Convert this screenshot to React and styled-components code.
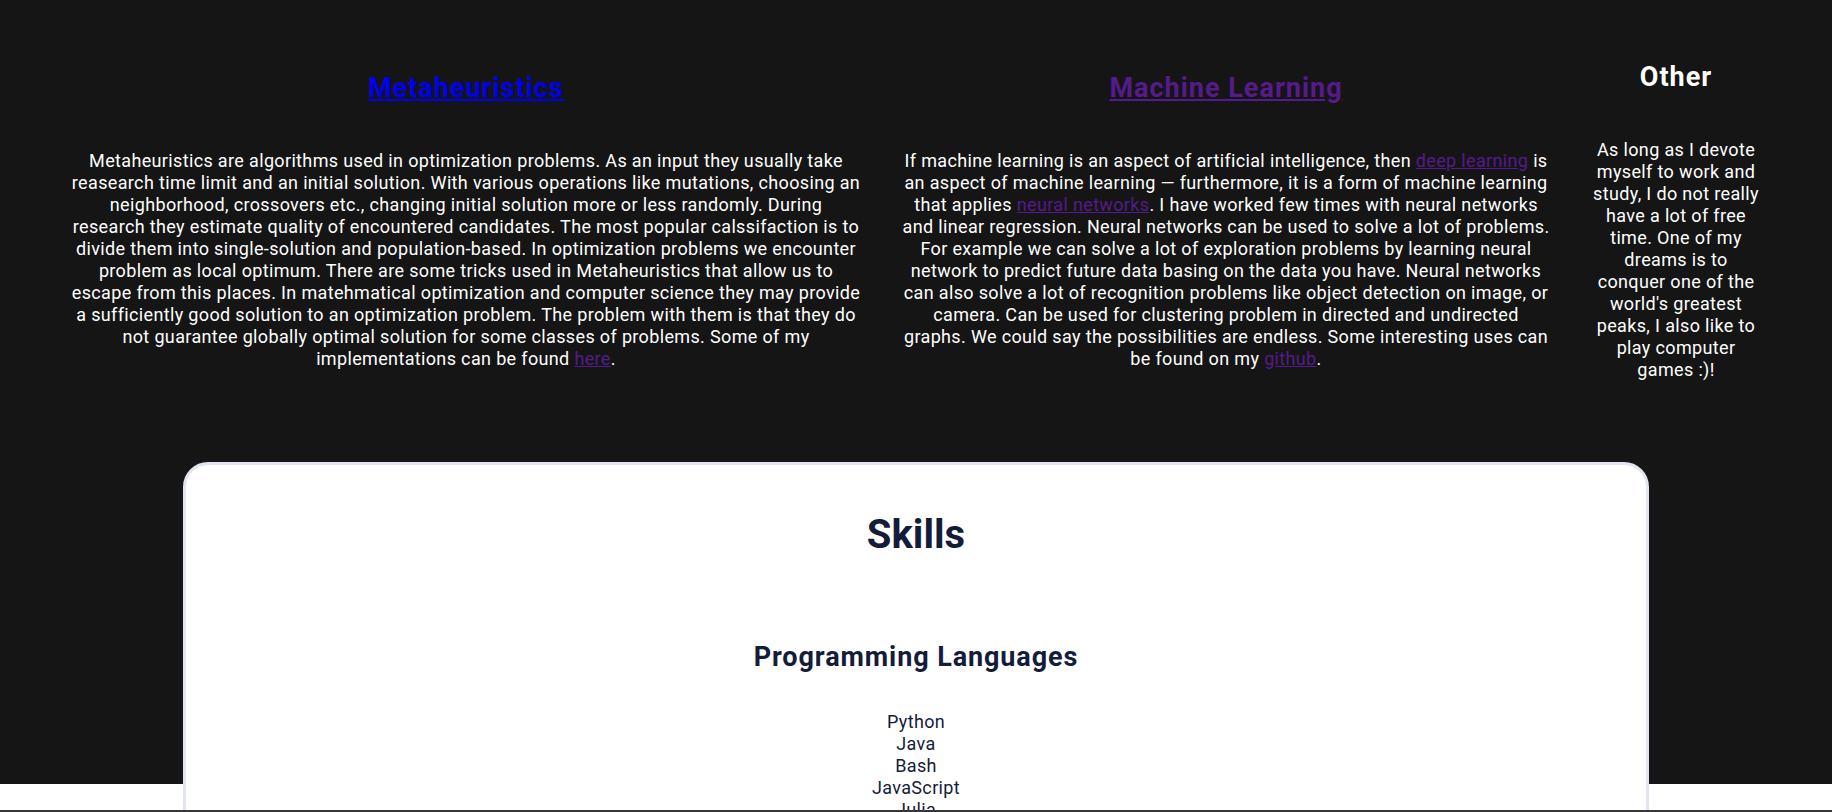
import React from 'react';
import styled, { createGlobalStyle } from 'styled-components';

const Global = createGlobalStyle`
  html, body { margin: 0; padding: 0; background: #fff; }
  body {
    font-family: Roboto, "Open Sans", sans-serif;
    font-size: 18px;
    -webkit-font-smoothing: antialiased;
  }
`;

const Interests = styled.section`
  box-sizing: border-box;
  height: 784px;
  background: #151515;
  color: #fff;
  display: flex;
  align-items: center;
  justify-content: center;
  gap: 30px;
  padding: 0 66px 342px;
`;

const Column = styled.div`
  flex: 0 0 ${(p) => p.$w}px;
  text-align: center;
`;

const Heading = styled.h2`
  margin: 0;
  font-size: 27px;
  line-height: 31px;
  font-weight: 700;
  letter-spacing: 1px;
`;

const Link = styled.a`
  color: ${(p) => (p.$visited ? '#551a8b' : '#0000ee')};
  text-decoration: underline;
`;

const Para = styled.p`
  margin: 46px 0 0;
  line-height: 22px;
  letter-spacing: 0.35px;
  white-space: nowrap;
`;

const SkillsCard = styled.section`
  position: relative;
  width: 80%;
  box-sizing: border-box;
  margin: -322px auto 0;
  background: #fff;
  border: 3px solid #e1e4f3;
  border-radius: 25px;
  color: #141c3a;
  text-align: center;
  padding: 47px 0 40px;
`;

const Title = styled.h1`
  margin: 0;
  font-size: 40px;
  line-height: 46px;
  font-weight: 700;
`;

const SubTitle = styled.h3`
  margin: 84px 0 0;
  font-size: 27px;
  line-height: 31px;
  font-weight: 700;
  letter-spacing: 0.9px;
`;

const List = styled.ul`
  list-style: none;
  margin: 38px 0 0;
  padding: 0;
  line-height: 22px;
  letter-spacing: 0.35px;
`;

const BottomRule = styled.div`
  position: fixed;
  left: 0;
  right: 0;
  bottom: 0;
  height: 2px;
  background: #363636;
  z-index: 5;
`;

function Lines({ lines }) {
  return lines.map((line, i) => (
    <React.Fragment key={i}>
      {i > 0 && <br />}
      {line}
    </React.Fragment>
  ));
}

const metaLines = [
  'Metaheuristics are algorithms used in optimization problems. As an input they usually take',
  'reasearch time limit and an initial solution. With various operations like mutations, choosing an',
  'neighborhood, crossovers etc., changing initial solution more or less randomly. During',
  'research they estimate quality of encountered candidates. The most popular calssifaction is to',
  'divide them into single-solution and population-based. In optimization problems we encounter',
  'problem as local optimum. There are some tricks used in Metaheuristics that allow us to',
  'escape from this places. In matehmatical optimization and computer science they may provide',
  'a sufficiently good solution to an optimization problem. The problem with them is that they do',
  'not guarantee globally optimal solution for some classes of problems. Some of my',
  <>
    implementations can be found <Link $visited href="#here">here</Link>.
  </>,
];

const mlLines = [
  <>
    If machine learning is an aspect of artificial intelligence, then{' '}
    <Link $visited href="#dl">deep learning</Link> is
  </>,
  'an aspect of machine learning — furthermore, it is a form of machine learning',
  <>
    that applies <Link $visited href="#nn">neural networks</Link>. I have worked few times with neural networks
  </>,
  'and linear regression. Neural networks can be used to solve a lot of problems.',
  'For example we can solve a lot of exploration problems by learning neural',
  'network to predict future data basing on the data you have. Neural networks',
  'can also solve a lot of recognition problems like object detection on image, or',
  'camera. Can be used for clustering problem in directed and undirected',
  'graphs. We could say the possibilities are endless. Some interesting uses can',
  <>
    be found on my <Link $visited href="#gh">github</Link>.
  </>,
];

const otherLines = [
  'As long as I devote',
  'myself to work and',
  'study, I do not really',
  'have a lot of free',
  'time. One of my',
  'dreams is to',
  'conquer one of the',
  "world's greatest",
  'peaks, I also like to',
  'play computer',
  'games :)!',
];

const languages = ['Python', 'Java', 'Bash', 'JavaScript', 'Julia', 'C++', 'SQL'];

export default function App() {
  return (
    <>
      <Global />
      <Interests>
        <Column $w={800}>
          <Heading>
            <Link href="#meta">Metaheuristics</Link>
          </Heading>
          <Para>
            <Lines lines={metaLines} />
          </Para>
        </Column>
        <Column $w={660}>
          <Heading>
            <Link $visited href="#ml">Machine Learning</Link>
          </Heading>
          <Para>
            <Lines lines={mlLines} />
          </Para>
        </Column>
        <Column $w={180}>
          <Heading>Other</Heading>
          <Para>
            <Lines lines={otherLines} />
          </Para>
        </Column>
      </Interests>
      <SkillsCard>
        <Title>Skills</Title>
        <SubTitle>Programming Languages</SubTitle>
        <List>
          {languages.map((l) => (
            <li key={l}>{l}</li>
          ))}
        </List>
      </SkillsCard>
      <BottomRule />
    </>
  );
}
